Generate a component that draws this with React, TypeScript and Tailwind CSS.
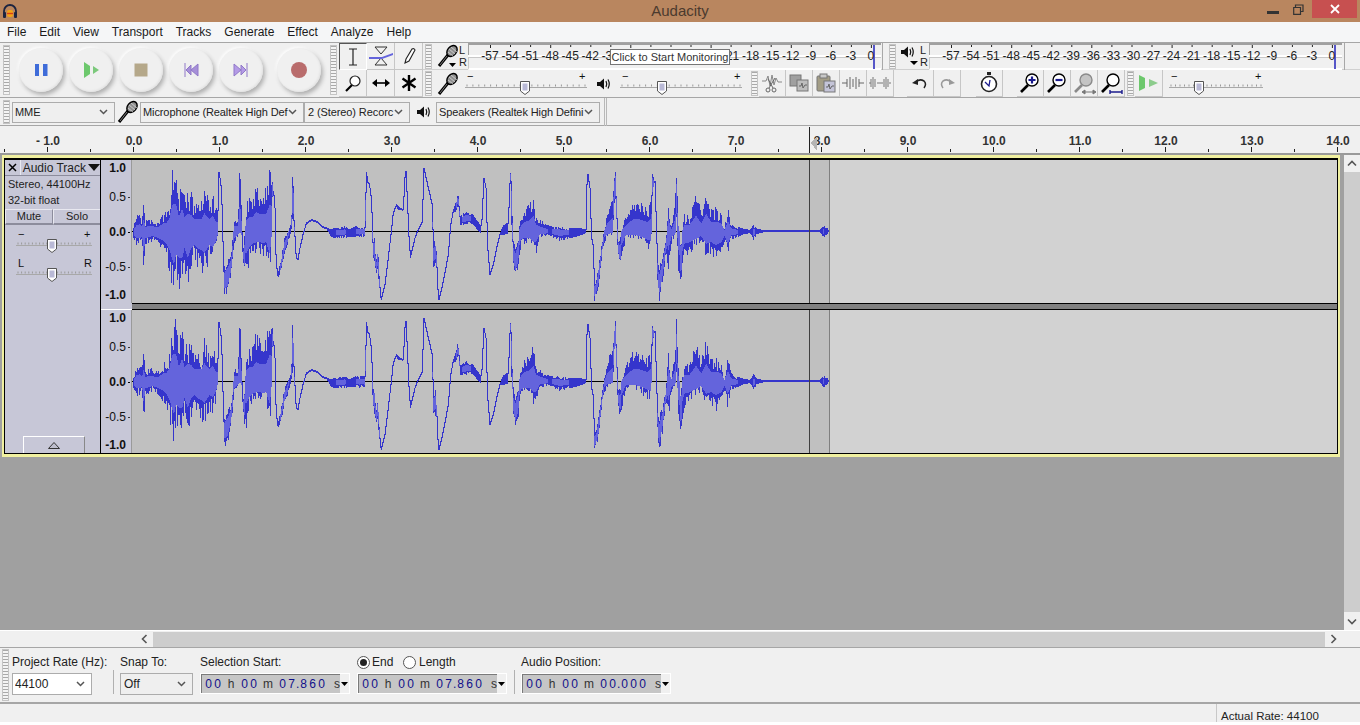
import type { JSX, ReactNode } from "react";

const FONT = "font-['Liberation_Sans',Arial,sans-serif]";
const GRIP =
  "bg-[repeating-linear-gradient(to_bottom,#a9a9a9_0,#a9a9a9_1px,#f4f4f4_1px,#f4f4f4_3px)]";

// waveform outline read off the screenshot: [x, top, bottom] in 3x zoom units
type Key = [number, number, number?];
const ZONE_A: Key[] = [
  [12, 210, 240], [20, 175, 265], [30, 165, 265], [38, 180, 255], [43, 125, 370], [47, 190, 260], [55, 180, 260],
  [70, 180, 250], [85, 190, 260], [100, 160, 280], [110, 160, 300], [120, 120, 340], [128, 20, 400], [133, 15, 435],
  [140, 15, 370], [148, 110, 390], [158, 50, 395], [165, 110, 330], [175, 90, 395], [185, 95, 330], [195, 130, 310],
  [205, 130, 330], [215, 130, 340], [225, 85, 360], [240, 130, 310], [250, 100, 320], [260, 150, 280], [264, 150, 240],
  [265, 30], [270, 60], [275, 100], [278, 220], [282, 340], [285, 320, 415], [295, 300, 410], [305, 290, 350],
  [315, 180, 260], [325, 180, 240], [331, 10, 225], [335, 100, 235], [340, 290], [345, 230, 350], [350, 140, 365],
  [360, 115, 320], [370, 115, 300], [380, 70, 290], [390, 90, 290], [400, 85, 295], [410, 90, 290], [420, 20, 360],
  [425, 20, 300], [430, 70, 90], [435, 150], [437, 270], [440, 325], [445, 350, 360], [455, 300, 340], [465, 240, 290],
  [475, 220, 260], [485, 200, 220], [490, 15, 200], [493, 100, 200], [497, 280], [503, 310], [510, 270], [520, 225],
  [530, 195], [545, 185], [560, 190], [575, 205], [590, 210], [605, 215, 235], [620, 210, 240], [645, 205, 240],
  [660, 215, 235], [680, 205, 235], [700, 205, 235], [706, 215, 240], [709, 35, 200], [715, 70], [720, 90],
];
const ZONE_B: Key[] = [
  [0, 205, 240], [15, 205, 240], [17, 150, 240], [20, 35, 50], [25, 80], [35, 130], [40, 240, 300], [45, 235, 320],
  [50, 310, 350], [55, 260, 340], [60, 350, 400], [65, 420, 430], [75, 380], [85, 300], [95, 210], [100, 165],
  [110, 140], [115, 145, 155], [130, 155], [137, 20], [142, 120], [148, 260], [153, 290, 300], [165, 240], [175, 215],
  [187, 190], [192, 30], [205, 90], [217, 140], [222, 250, 330], [230, 245, 320], [236, 430], [250, 370], [265, 290],
  [272, 200], [280, 160], [290, 130, 160], [296, 100, 140], [302, 175, 200], [320, 160, 200], [340, 170, 195],
  [350, 185, 210], [365, 205, 225], [372, 60], [378, 90], [383, 265], [390, 350], [400, 320], [410, 270], [420, 230],
  [430, 205, 230], [445, 195, 225], [452, 30], [456, 60, 210], [462, 250, 330], [468, 260, 360], [475, 240, 340],
  [485, 170, 270], [495, 150, 260], [510, 135, 260], [522, 105, 290], [530, 170, 290], [540, 180, 240], [555, 195, 235],
  [570, 205, 230], [600, 205, 250], [630, 210, 240], [650, 210, 235], [678, 215, 225], [682, 35], [690, 90], [695, 240],
  [700, 265], [705, 370, 430], [712, 360, 410], [718, 310, 390],
];
const ZONE_C: Key[] = [
  [0, 90], [5, 180], [12, 295], [15, 370, 430], [22, 350, 400], [30, 290, 300], [40, 240, 270], [55, 150, 235],
  [70, 120, 230], [77, 10, 120], [80, 50, 190], [85, 240, 290], [92, 240, 330], [100, 200, 290], [110, 170, 240],
  [130, 130, 240], [150, 130, 250], [175, 150, 275], [185, 120, 280], [188, 35, 130], [195, 70], [200, 220],
  [205, 320, 400], [210, 320, 430], [220, 290, 370], [230, 240, 280], [237, 130, 340], [245, 210, 260], [255, 145, 240],
  [262, 15, 210], [268, 210, 370], [275, 230, 380], [285, 170, 300], [300, 170, 290], [320, 100, 270], [335, 160, 250],
  [350, 85, 300], [365, 150, 290], [380, 145, 310], [395, 160, 290], [405, 210, 250], [415, 140, 300], [425, 195, 245],
  [440, 205, 240], [460, 213, 228], [480, 217, 224], [488, 210, 232], [493, 195, 252], [500, 212, 228], [520, 218, 222],
  [690, 218, 222], [697, 212, 228], [703, 202, 238], [708, 210, 230], [714, 210, 228], [717, 218, 222],
];

const KEYS: [number, number, number][] = [
  ...ZONE_A.map((k) => [130 + k[0] / 3, k[1] / 3 - 2, (k[2] ?? k[1]) / 3 - 2] as [number, number, number]),
  ...ZONE_B.map((k) => [360 + k[0] / 3, k[1] / 3 - 2, (k[2] ?? k[1]) / 3 - 2] as [number, number, number]),
  ...ZONE_C.filter((k) => k[0] > 30).map((k) => [590 + k[0] / 3, k[1] / 3 - 2, (k[2] ?? k[1]) / 3 - 2] as [number, number, number]),
].sort((a, b) => a[0] - b[0]);

const MID = 71.5;

function buildWave(seed: number) {
  let s = seed;
  const rnd = () => {
    s = (s * 16807) % 2147483647;
    return s / 2147483647;
  };
  let dark = "";
  let light = "";
  let prevTop = MID;
  let prevBot = MID;
  for (let x = 134; x <= 829; x++) {
    let i = 0;
    while (i < KEYS.length - 2 && KEYS[i + 1][0] < x) i++;
    const a = KEYS[i];
    const b = KEYS[i + 1];
    const t = Math.min(1, Math.max(0, (x - a[0]) / (b[0] - a[0] || 1)));
    const top = a[1] + (b[1] - a[1]) * t;
    const bot = a[2] + (b[2] - a[2]) * t;
    const w = bot - top;
    let y1 = top;
    let y2 = bot;
    if (w > 10) {
      y1 += rnd() * w * 0.28;
      y2 -= rnd() * w * 0.28;
    }
    const dy1 = Math.floor(Math.min(y1, prevBot));
    const dy2 = Math.ceil(Math.max(y2, prevTop, dy1 + 2));
    dark += `M${x - 132.5} ${dy1}V${dy2}`;
    if (w > 10) {
      let l1 = top + w * 0.25;
      let l2 = bot - w * 0.25;
      if (top < MID && bot > MID) {
        l1 = MID - (MID - top) * 0.4;
        l2 = MID + (bot - MID) * 0.46;
      }
      light += `M${x - 132.5} ${l1.toFixed(1)}V${l2.toFixed(1)}`;
    }
    prevTop = y1;
    prevBot = y2;
  }
  return { dark, light };
}

const WAVE_ONE = buildWave(1234);
const WAVE_TWO = buildWave(98765);

const Grip = ({ className = "h-[24px]" }: { className?: string }): JSX.Element => (
  <div className={`w-[7px] shrink-0 border border-[#c4c4c4] ${GRIP} ${className}`} />
);

const Mic = ({ drop }: { drop?: boolean }): JSX.Element => (
  <svg width="22" height="24" viewBox="0 0 22 24" className="block">
    <path d="M2 22 L11 11" stroke="#000" strokeWidth="3" />
    <path d="M3 21 L10 12" stroke="#999" strokeWidth="0.8" />
    <ellipse cx="15" cy="7" rx="4.5" ry="6" transform="rotate(40 15 7)" fill="#8f8f8f" stroke="#000" strokeWidth="1.4" />
    <path d="M12 5 L18 10 M14 3 L20 8 M11 8 L16 12" stroke="#e4e4e4" strokeWidth="0.7" />
    {drop && <path d="M12 19H19L15.5 23Z" fill="#000" />}
  </svg>
);

const Speaker = ({ drop }: { drop?: boolean }): JSX.Element => (
  <svg width="18" height={drop ? 22 : 14} viewBox={drop ? "0 0 18 22" : "0 0 18 14"} className="block">
    <path d="M0 5H3L7 1.5V12.5L3 9H0Z" fill="#111" />
    <path d="M9 4Q10.5 7 9 10M11 2.5Q13.5 7 11 11.5" fill="none" stroke="#111" strokeWidth="1.2" />
    {drop && <path d="M9 16H17L13 20Z" fill="#000" />}
  </svg>
);

const Glass = ({ mark, color = "#000" }: { mark?: ReactNode; color?: string }): JSX.Element => (
  <svg width="24" height="24" viewBox="0 0 24 24">
    <path d="M3 21 L10 14" stroke={color} strokeWidth="2.6" />
    <circle cx="14" cy="9" r="6" fill={color === "#000" ? "#fff" : "#c4c4c4"} stroke={color} strokeWidth="1.4" />
    {mark}
  </svg>
);

const Slider = ({ width, thumb, left = "−", right = "+" }: { width: number; thumb: number; left?: string; right?: string }): JSX.Element => {
  const ticks: number[] = [];
  for (let x = 2; x < width; x += (width - 4) / 20) ticks.push(x);
  return (
    <svg width={width} height="28" viewBox={`0 0 ${width} 28`} className="block shrink-0">
      <text x="2" y="11" fontSize="11" fontFamily="Liberation Sans" fill="#111">{left}</text>
      <text x={width - 8} y="11" fontSize="11" fontFamily="Liberation Sans" fill="#111">{right}</text>
      {ticks.map((x) => (
        <path key={x} d={`M${x.toFixed(1)} 15.5V17.5`} stroke="#9a9a9a" />
      ))}
      <path d={`M0 18.5H${width}`} stroke="#a8a8a8" strokeWidth="1" />
      <path d={`M${thumb - 4.5} 12.5H${thumb + 4.5}V22L${thumb} 25.5L${thumb - 4.5} 22Z`} fill="#fff" stroke="#555" />
      <rect x={thumb - 2.5} y="14.5" width="5" height="7" fill="#b9b9d6" />
    </svg>
  );
};

const ToolCell = ({ active, children, className = "w-[27px]" }: { active?: boolean; children: ReactNode; className?: string }): JSX.Element => (
  <div
    className={`h-[27px] shrink-0 flex items-center justify-center border-r border-b ${className} ${
      active ? "border-[#fff] border-l border-l-[#555] border-t border-t-[#555]" : "border-[#c6c6c6]"
    }`}
  >
    {children}
  </div>
);

const METER_LABELS = ["-57", "-54", "-51", "-48", "-45", "-42", "-39", "-36", "-33", "-30", "-27", "-24", "-21", "-18", "-15", "-12", "-9", "-6", "-3", "0"];

const Meter = ({ width }: { width: number }): JSX.Element => (
  <div className="relative h-[27px] shrink-0" style={{ width }}>
    <div className="h-[12px] border-t-2 border-l border-[#a0a0a0]" />
    <div className="h-[2px] bg-white" />
    <div className="h-[13px] border-l border-t border-[#c8c8c8] border-b-2 border-b-white" />
    <svg width={width} height="27" className="absolute left-0 top-0">
      {METER_LABELS.map((_, i) => (
        <path key={i} d={`M${(22.5 + i * 20.05).toFixed(1)} 2V${i % 4 === 3 || i === 0 ? 5 : 4}`} stroke="#222" />
      ))}
      <path d={`M${width - 7} 2V26`} stroke="#5656c8" strokeWidth="2" />
    </svg>
    <div className="absolute left-[12px] top-[6px] flex text-[12px] leading-[15px] text-[#222]">
      {METER_LABELS.map((l) => (
        <span key={l} className="w-[20.05px] text-center shrink-0">{l}</span>
      ))}
    </div>
  </div>
);

const Chevron = (): JSX.Element => (
  <svg width="9" height="6" viewBox="0 0 9 6" className="shrink-0">
    <path d="M1 1L4.5 4.5L8 1" fill="none" stroke="#555" strokeWidth="1.5" />
  </svg>
);

const Select = ({ label, className, white }: { label: string; className: string; white?: boolean }): JSX.Element => (
  <div className={`flex items-center shrink-0 border border-[#acacac] pr-[6px] text-[#222] ${white ? "bg-white" : "bg-[#efefef]"} ${className}`}>
    <span className="flex-1 overflow-hidden whitespace-nowrap">{label}</span>
    <Chevron />
  </div>
);

const DIGIT = "w-[9px] text-center text-[#10108a]";

const TimeBox = ({ secs, milli }: { secs: string; milli: string }): JSX.Element => (
  <div className="w-[150px] h-[21px] shrink-0 flex items-center bg-[#c6c6c6] border border-white shadow-[inset_1px_1px_0_#7a7a7a] pl-[3px] text-[12px] text-[#333]">
    <span className={DIGIT}>0</span>
    <span className={DIGIT}>0</span>
    <span className="w-[18px] text-center">h</span>
    <span className={DIGIT}>0</span>
    <span className={DIGIT}>0</span>
    <span className="w-[20px] text-center">m</span>
    <span className={DIGIT}>{secs[0]}</span>
    <span className={DIGIT}>{secs[1]}</span>
    <span className="w-[3px] text-center text-[#10108a]">.</span>
    <span className={DIGIT}>{milli[0]}</span>
    <span className={DIGIT}>{milli[1]}</span>
    <span className={DIGIT}>{milli[2]}</span>
    <span className="w-[14px] text-right">s</span>
    <span className="ml-auto w-[9px] h-[19px] bg-[#f0f0f0] flex items-center justify-center text-[0px]">
      <svg width="7" height="4" viewBox="0 0 7 4"><path d="M0 0H7L3.5 4Z" fill="#000" /></svg>
    </span>
  </div>
);

const Radio = ({ checked }: { checked?: boolean }): JSX.Element => (
  <span className="w-[13px] h-[13px] rounded-full border border-[#555] bg-white flex items-center justify-center shrink-0">
    {checked && <span className="w-[7px] h-[7px] rounded-full bg-[#222]" />}
  </span>
);

const TrackRuler = (): JSX.Element => (
  <div className="w-[31px] h-[143px] shrink-0 bg-[#c7c7d7] border-r border-[#9a9a9a] flex flex-col items-end pr-[1px] text-[12px] leading-[14px] text-[#111] font-bold">
    <span className="mt-[1px] mr-[4px]">1.0</span>
    <span className="mt-[15px] flex items-center font-normal">0.5<i className="ml-[2px] w-[2px] h-[1px] bg-[#333]" /></span>
    <span className="mt-[21px] flex items-center">0.0<i className="ml-[2px] w-[2px] h-[1px] bg-[#000]" /></span>
    <span className="mt-[21px] flex items-center font-normal">-0.5<i className="ml-[2px] w-[2px] h-[1px] bg-[#333]" /></span>
    <span className="mt-[14px] mr-[4px]">-1.0</span>
  </div>
);

const Wave = ({ data }: { data: { dark: string; light: string } }): JSX.Element => (
  <svg width="1205" height="143" viewBox="0 0 1205 143" className="block shrink-0" shapeRendering="crispEdges">
    <rect x="0" y="0" width="1205" height="143" fill="#d2d2d2" />
    <rect x="0" y="0" width="697" height="143" fill="#c0c0c0" />
    <path d="M0 71.5H677" stroke="#000" strokeWidth="1" />
    <path d={data.dark} stroke="#3535cc" strokeWidth="1" fill="none" />
    <path d={data.light} stroke="#6464dc" strokeWidth="1" fill="none" />
    <path d="M677.5 0V143" stroke="#404040" />
    <path d="M697.5 0V143" stroke="#808080" />
  </svg>
);

const RULER_LABELS = ["- 1.0", "0.0", "1.0", "2.0", "3.0", "4.0", "5.0", "6.0", "7.0", "8.0", "9.0", "10.0", "11.0", "12.0", "13.0", "14.0"];

export default function App(): JSX.Element {
  return (
    <div className={`w-[1360px] h-[725px] overflow-hidden bg-white flex flex-col ${FONT}`}>
      {/* Title bar */}
      <div className="h-[22px] shrink-0 bg-[#b9865f] flex items-center justify-between relative">
        <svg width="16" height="16" viewBox="0 0 16 16" className="ml-[2px]">
          <path d="M2 11V8a6 6 0 0 1 12 0v3" fill="none" stroke="#1c2440" strokeWidth="1.8" />
          <rect x="1" y="9" width="3" height="6" rx="1" fill="#1c2440" />
          <rect x="12" y="9" width="3" height="6" rx="1" fill="#1c2440" />
          <rect x="5" y="7" width="6" height="7" rx="2" fill="#f2a316" />
          <path d="M5 10.5H11" stroke="#d8401c" strokeWidth="1.4" />
        </svg>
        <span className="absolute left-0 right-0 text-center text-[15px] text-[#4b3a2e]">Audacity</span>
        <div className="flex items-center relative">
          <svg width="12" height="4" viewBox="0 0 12 4" className="mb-[-4px] mr-[14px]"><rect y="0" width="12" height="3" fill="#333" /></svg>
          <svg width="11" height="11" viewBox="0 0 11 11" className="mb-[4px] mr-[8px]">
            <path d="M2.5 3.5V1H10V7.5H7.5M.7 3.5H7.5V10.3H.7Z" fill="none" stroke="#333" strokeWidth="1.2" />
          </svg>
          <div className="w-[45px] h-[18px] mb-[4px] bg-[#c75050] flex items-center justify-center mr-[3px]">
            <svg width="10" height="10" viewBox="0 0 10 10"><path d="M1 1L9 9M9 1L1 9" stroke="#fff" strokeWidth="1.8" /></svg>
          </div>
        </div>
      </div>

      {/* Menu bar */}
      <div className="h-[20px] shrink-0 bg-[#f5f6f7] flex items-center gap-[13px] px-[7px] text-[12px] text-[#1a1a1a]">
        {["File", "Edit", "View", "Transport", "Tracks", "Generate", "Effect", "Analyze", "Help"].map((m) => (
          <span key={m}>{m}</span>
        ))}
      </div>

      {/* Toolbars */}
      <div className="h-[56px] shrink-0 bg-[#f0f0f0] flex border-t border-b border-[#a6a6a6]">
        {/* Transport */}
        <div className="w-[330px] shrink-0 flex items-center pl-[3px]">
          <Grip className="h-[50px]" />
          <div className="flex items-center gap-[6px] ml-[9px]">
            <TransportBtn>
              <path d="M6 6H10V18H6ZM14 6H18.5V18H14Z" fill="#3f6cd9" />
            </TransportBtn>
            <TransportBtn>
              <path d="M5 4L11 8V16L5 20Z" fill="#6dc86d" />
              <path d="M14 8L20 12L14 16Z" fill="#7cc97c" />
            </TransportBtn>
            <TransportBtn>
              <rect x="5.5" y="5.5" width="13" height="13" fill="#b5a88a" />
            </TransportBtn>
            <TransportBtn>
              <path d="M6 5V19M12 7L7 12L12 17ZM19 6L12 12L19 18Z" fill="#a68fd8" stroke="#9079c8" strokeWidth="1" />
            </TransportBtn>
            <TransportBtn>
              <path d="M18 5V19M12 7L17 12L12 17ZM5 6L12 12L5 18Z" fill="#b49be6" stroke="#9079c8" strokeWidth="1" />
            </TransportBtn>
            <TransportBtn className="ml-[8px]">
              <circle cx="12" cy="12" r="8" fill="#b96c6c" />
            </TransportBtn>
          </div>
        </div>

        {/* Tools */}
        <div className="w-[93px] shrink-0 flex items-center">
          <Grip className="h-[50px]" />
          <div className="ml-[2px] grid grid-cols-3 w-[84px]">
            <ToolCell active className="w-[28px]">
              <svg width="12" height="18" viewBox="0 0 12 18"><path d="M2 1H10M6 1V17M2 17H10" stroke="#222" strokeWidth="1.2" /></svg>
            </ToolCell>
            <ToolCell className="w-[28px]">
              <svg width="26" height="20" viewBox="0 0 26 20">
                <path d="M7 1H19L13 8ZM7 19H19L13 12Z" fill="none" stroke="#333" />
                <path d="M1 11L14 11L25 7V9L14 13H1Z" fill="#6464dc" />
              </svg>
            </ToolCell>
            <ToolCell className="w-[28px]">
              <svg width="16" height="18" viewBox="0 0 16 18">
                <path d="M5 12L11 2Q13 1 14 3L8 14L4 16Z" fill="#fff" stroke="#222" strokeWidth="1.1" />
              </svg>
            </ToolCell>
            <ToolCell className="w-[28px]">
              <svg width="18" height="20" viewBox="0 0 18 20">
                <path d="M2 18L8 12" stroke="#000" strokeWidth="2.2" />
                <circle cx="11" cy="8" r="5" fill="#fff" stroke="#222" strokeWidth="1.2" />
              </svg>
            </ToolCell>
            <ToolCell className="w-[28px]">
              <svg width="18" height="10" viewBox="0 0 18 10"><path d="M4 5H14" stroke="#000" strokeWidth="1.6" /><path d="M0 5L5 1V9ZM18 5L13 1V9Z" fill="#000" /></svg>
            </ToolCell>
            <ToolCell className="w-[28px]">
              <svg width="16" height="18" viewBox="0 0 16 18"><path d="M8 1V17M1.5 4.5L14.5 13.5M14.5 4.5L1.5 13.5" stroke="#000" strokeWidth="2.4" /></svg>
            </ToolCell>
          </div>
        </div>

        <div className="flex-1 flex flex-col min-w-0">
          {/* Meters */}
          <div className="h-[27px] shrink-0 flex items-center border-b border-[#d0d0d0]">
            <Grip className="h-[25px] ml-[2px]" />
            <div className="w-[21px] ml-[5px] shrink-0"><Mic drop /></div>
            <div className="w-[8px] ml-[1px] text-[11px] leading-[12px] text-[#222]">
              <div>L</div>
              <div>R</div>
            </div>
            <div className="ml-[1px]"><Meter width={413} /></div>
            <div className="w-[1px] h-[27px] bg-[#a8a8a8] ml-[1px]" />
            <Grip className="h-[25px] ml-[6px]" />
            <div className="ml-[5px] w-[18px] shrink-0"><Speaker drop /></div>
            <div className="w-[8px] ml-[1px] text-[11px] leading-[12px] text-[#222]">
              <div>L</div>
              <div>R</div>
            </div>
            <div className="ml-[1px]"><Meter width={413} /></div>
            <div className="w-[1px] h-[27px] bg-[#a8a8a8] ml-[2px]" />
            <div className="absolute left-[610px] top-[49px] w-[120px] h-[16px] bg-white border border-[#767676] text-[11px] leading-[14px] text-[#333] text-center whitespace-nowrap">
              Click to Start Monitoring
            </div>
          </div>
          {/* Mixer, edit, zoom */}
          <div className="h-[27px] shrink-0 flex items-center">
            <Grip className="h-[25px] ml-[2px]" />
            <div className="ml-[5px] w-[21px] shrink-0"><Mic /></div>
            <div className="ml-[7px] mt-[-1px]"><Slider width={122} thumb={60} /></div>
            <div className="ml-[10px] w-[14px] shrink-0"><Speaker /></div>
            <div className="ml-[9px] mt-[-1px]"><Slider width={122} thumb={42} /></div>
            <Grip className="h-[25px] ml-[9px]" />
            <ToolCell className="w-[27px] ml-[1px]">
              <svg width="22" height="20" viewBox="0 0 22 20">
                <path d="M1 8H5L7 3L9 13L11 2L13 12L15 5L17 9H21" fill="none" stroke="#888" />
                <circle cx="7" cy="17" r="2" fill="none" stroke="#666" /><circle cx="13" cy="17" r="2" fill="none" stroke="#666" />
                <path d="M8 15L14 5M12 15L7 6" stroke="#666" />
              </svg>
            </ToolCell>
            <ToolCell>
              <svg width="20" height="18" viewBox="0 0 20 18">
                <rect x="1" y="1" width="11" height="11" fill="#a0a0a0" stroke="#777" />
                <rect x="8" y="6" width="11" height="11" fill="#bdbdbd" stroke="#777" />
                <path d="M10 12H12L13 9L14 14L16 11H18" fill="none" stroke="#666" />
              </svg>
            </ToolCell>
            <ToolCell>
              <svg width="20" height="20" viewBox="0 0 20 20">
                <rect x="1" y="3" width="13" height="15" rx="1" fill="#a39d86" stroke="#777" />
                <rect x="4" y="1" width="7" height="4" fill="#c8c8c8" stroke="#777" />
                <rect x="8" y="8" width="11" height="11" fill="#c4c4d8" stroke="#777" />
                <path d="M10 14H12L13 11L14 16L16 13H18" fill="none" stroke="#666" />
              </svg>
            </ToolCell>
            <ToolCell>
              <svg width="22" height="14" viewBox="0 0 22 14"><path d="M0 7H5M17 7H22M5 3V11M8 1V13M11 3V11M14 1V13M17 3V11" stroke="#666" fill="none" /></svg>
            </ToolCell>
            <ToolCell>
              <svg width="22" height="14" viewBox="0 0 22 14"><path d="M2 3V11M4 1V13M6 3V11M8 7H14M15 3V11M17 1V13M19 3V11M0 7H2M20 7H22" stroke="#777" fill="none" /></svg>
            </ToolCell>
            <div className="w-[13px] shrink-0" />
            <ToolCell>
              <svg width="16" height="14" viewBox="0 0 16 14"><path d="M3 7Q7 2 12 5Q15 8 12 12" fill="none" stroke="#222" strokeWidth="1.5" /><path d="M0 7L6 3V9Z" fill="#222" /></svg>
            </ToolCell>
            <ToolCell>
              <svg width="16" height="14" viewBox="0 0 16 14"><path d="M13 7Q9 2 4 5Q1 8 4 12" fill="none" stroke="#999" strokeWidth="1.5" /><path d="M16 7L10 3V9Z" fill="#999" /></svg>
            </ToolCell>
            <div className="w-[15px] shrink-0" />
            <ToolCell>
              <svg width="18" height="22" viewBox="0 0 18 22">
                <rect x="7" y="0" width="4" height="3" fill="#222" />
                <circle cx="9" cy="12" r="7.5" fill="#fff" stroke="#222" strokeWidth="1.6" />
                <path d="M5 10L9 14L10 8" fill="none" stroke="#1a1a8c" strokeWidth="1.3" />
              </svg>
            </ToolCell>
            <div className="w-[14px] shrink-0" />
            <ToolCell>
              <Glass mark={<path d="M10.5 9H17.5M14 5.5V12.5" stroke="#1a1a8c" strokeWidth="2.2" />} />
            </ToolCell>
            <ToolCell>
              <Glass mark={<path d="M10.5 9H17.5" stroke="#1a1a8c" strokeWidth="2.2" />} />
            </ToolCell>
            <ToolCell>
              <Glass color="#8a8a8a" mark={<path d="M12 21H22M10 21L13 19V23ZM24 21L21 19V23Z" stroke="#777" fill="#777" />} />
            </ToolCell>
            <ToolCell>
              <Glass mark={<path d="M11 21H23M11 19V23M23 19V23" stroke="#1a1a8c" strokeWidth="1.4" />} />
            </ToolCell>
            <Grip className="h-[25px] ml-[2px]" />
            <ToolCell className="w-[28px] ml-[1px]">
              <svg width="22" height="18" viewBox="0 0 22 18">
                <path d="M1 1L7 4V14L1 17Z" fill="#6dc86d" />
                <path d="M11 5L20 9L11 13Z" fill="#8ccc8c" />
              </svg>
            </ToolCell>
            <div className="ml-[6px] mt-[-1px]"><Slider width={94} thumb={30} /></div>
          </div>
        </div>
      </div>

      {/* Device toolbar */}
      <div className="h-[28px] shrink-0 bg-[#f0f0f0] flex items-center border-b border-[#a6a6a6] text-[11px] tracking-[-0.1px]">
        <Grip className="h-[24px] ml-[3px]" />
        <Select label="MME" className="ml-[2px] w-[103px] h-[21px] pl-[2px] mt-[1px]" />
        <div className="ml-[2px] w-[23px] shrink-0"><Mic /></div>
        <Select label="Microphone (Realtek High Def" className="w-[164px] h-[21px] pl-[2px] mt-[1px]" />
        <Select label="2 (Stereo) Recorc" className="w-[106px] h-[21px] pl-[3px] mt-[1px]" />
        <div className="ml-[7px] w-[14px] shrink-0"><Speaker /></div>
        <Select label="Speakers (Realtek High Defini" className="ml-[5px] w-[164px] h-[21px] pl-[2px] mt-[1px]" />
        <div className="ml-[4px] w-[3px] h-[28px] border-x border-[#b8b8b8]" />
      </div>

      {/* Timeline */}
      <div className="h-[29px] shrink-0 bg-[#f0f0f0] relative pt-[7px] border-b-2 border-[#9a9a9a]">
        <div className="flex ml-[5px] text-[12px] leading-[16px] font-bold text-[#333]">
          {RULER_LABELS.map((l) => (
            <span key={l} className="w-[86px] shrink-0 text-center">{l}</span>
          ))}
        </div>
        <svg width="1360" height="27" className="absolute left-0 top-0" shapeRendering="crispEdges">
          {Array.from({ length: 32 }, (_, i) => {
            const x = 4.5 + i * 43;
            return <path key={i} d={`M${x} ${i % 2 ? 21 : 23}V26`} stroke="#222" />;
          })}
          <path d="M809.5 1V27" stroke="#222" />
          <path d="M817 10V25L811 17Z" fill="#b4b4b4" />
        </svg>
      </div>

      {/* Tracks */}
      <div className="h-[475px] shrink-0 flex bg-[#a0a0a0]">
        <div className="w-[1344px] shrink-0 pl-[2px] pr-[4px]">
          <div className="h-[302px] border-t-[3px] border-b-[3px] border-x-2 border-[#f0f0a0]">
            <div className="h-[296px] border-t-2 border-b border-x border-black flex">
              <div className="w-[96px] shrink-0 bg-[#c7c7d7] border-r border-black flex flex-col text-[11px] text-[#222]">
                <div className="h-[16px] shrink-0 flex border-b border-[#8c8c9c]">
                  <div className="w-[16px] flex items-center justify-center border-r border-[#e8e8f0]">
                    <svg width="9" height="9" viewBox="0 0 9 9"><path d="M1 1L8 8M8 1L1 8" stroke="#000" strokeWidth="1.5" /></svg>
                  </div>
                  <div className="flex-1 flex items-center pl-[2px] text-[12px] whitespace-nowrap">
                    <span>Audio Track</span>
                    <svg width="12" height="7" viewBox="0 0 12 7" className="ml-[2px] shrink-0"><path d="M0 0H12L6 7Z" fill="#111" /></svg>
                  </div>
                </div>
                <div className="h-[32px] shrink-0 pl-[3px] leading-[16px]">
                  <div>Stereo, 44100Hz</div>
                  <div>32-bit float</div>
                </div>
                <div className="h-[17px] shrink-0 flex text-[11px] pt-[1px]">
                  <div className="w-[48px] flex items-center justify-center border-t border-l border-[#e8e8f0] border-b-2 border-b-[#8c8c9c] border-r border-r-[#8c8c9c]">Mute</div>
                  <div className="flex-1 flex items-center justify-center border-t border-l border-[#e8e8f0] border-b-2 border-b-[#8c8c9c]">Solo</div>
                </div>
                <div className="ml-[11px] mt-[2px]"><Slider width={76} thumb={36} /></div>
                <div className="ml-[11px] mt-[1px]"><Slider width={76} thumb={36} left="L" right="R" /></div>
                <div className="mt-auto ml-[18px] w-[62px] h-[17px] border-t border-l border-white border-r border-r-[#888] flex items-center justify-center">
                  <svg width="12" height="7" viewBox="0 0 12 7"><path d="M6 0.5L11.5 6.5H0.5Z" fill="#bdbdcc" stroke="#333" /></svg>
                </div>
              </div>
              <div className="flex-1 flex flex-col min-w-0">
                <div className="flex"><TrackRuler /><Wave data={WAVE_ONE} /></div>
                <div className="h-[7px] shrink-0 flex">
                  <div className="w-[31px] bg-[#c7c7d7] border-b border-white" />
                  <div className="flex-1 bg-[#808080] border-y border-black" />
                </div>
                <div className="flex"><TrackRuler /><Wave data={WAVE_TWO} /></div>
              </div>
            </div>
          </div>
        </div>
        <div className="w-[16px] shrink-0 bg-[#f0f0f0] flex flex-col items-center">
          <div className="h-[17px] flex items-center justify-center">
            <svg width="10" height="7" viewBox="0 0 10 7"><path d="M1 5.5L5 1.5L9 5.5" fill="none" stroke="#555" strokeWidth="1.6" /></svg>
          </div>
          <div className="w-full h-[440px] bg-[#cdcdcd]" />
          <div className="flex-1 flex items-center justify-center">
            <svg width="10" height="7" viewBox="0 0 10 7"><path d="M1 1.5L5 5.5L9 1.5" fill="none" stroke="#555" strokeWidth="1.6" /></svg>
          </div>
        </div>
      </div>

      {/* Horizontal scrollbar */}
      <div className="h-[17px] shrink-0 bg-[#f0f0f0] border-t border-white flex items-center">
        <div className="w-[153px] flex justify-end pr-[5px]">
          <svg width="7" height="10" viewBox="0 0 7 10"><path d="M5.5 1L1.5 5L5.5 9" fill="none" stroke="#555" strokeWidth="1.6" /></svg>
        </div>
        <div className="w-[1172px] h-[15px] bg-[#cdcdcd]" />
        <div className="ml-[5px]">
          <svg width="7" height="10" viewBox="0 0 7 10"><path d="M1.5 1L5.5 5L1.5 9" fill="none" stroke="#555" strokeWidth="1.6" /></svg>
        </div>
      </div>

      {/* Selection toolbar */}
      <div className="h-[57px] shrink-0 bg-[#f0f0f0] border-t border-b-2 border-[#a6a6a6] flex items-center pb-[2px] text-[12px] text-[#222]">
        <Grip className="h-[52px] ml-[2px] mt-[2px]" />
        <div className="ml-[3px] w-[88px] shrink-0 flex flex-col gap-[3px]">
          <span className="whitespace-nowrap leading-[16px]">Project Rate (Hz):</span>
          <Select label="44100" white className="w-[80px] h-[22px] pl-[2px]" />
        </div>
        <div className="ml-[13px] w-[1px] h-[24px] self-end mb-[6px] bg-[#b0b0b0]" />
        <div className="ml-[6px] w-[74px] shrink-0 flex flex-col gap-[3px]">
          <span className="leading-[16px]">Snap To:</span>
          <Select label="Off" className="w-[73px] h-[22px] pl-[3px]" />
        </div>
        <div className="ml-[6px] w-[157px] shrink-0 flex flex-col gap-[3px]">
          <span className="leading-[16px]">Selection Start:</span>
          <TimeBox secs="07" milli="860" />
        </div>
        <div className="w-[157px] shrink-0 flex flex-col gap-[3px]">
          <div className="flex items-center h-[16px]">
            <Radio checked />
            <span className="ml-[2px] w-[31px]">End</span>
            <Radio />
            <span className="ml-[3px]">Length</span>
          </div>
          <TimeBox secs="07" milli="860" />
        </div>
        <div className="w-[1px] h-[24px] self-end mb-[6px] bg-[#b0b0b0]" />
        <div className="ml-[6px] flex flex-col gap-[3px]">
          <span className="leading-[16px]">Audio Position:</span>
          <TimeBox secs="00" milli="000" />
        </div>
      </div>

      {/* Status bar */}
      <div className="h-[18px] shrink-0 bg-[#f0f0f0] flex items-end text-[11.5px] text-[#222]">
        <div className="ml-[1216px] h-[18px] border-l border-[#c8c8c8] pl-[4px] leading-[24px] overflow-hidden">Actual Rate: 44100</div>
      </div>
    </div>
  );
}

function TransportBtn({ children, className = "" }: { children: ReactNode; className?: string }): JSX.Element {
  return (
    <div className={`w-[44px] h-[44px] shrink-0 rounded-full bg-[#f0f0f0] flex items-center justify-center shadow-[2px_3px_4px_#b0b0b0,-1px_-1px_3px_#ffffff,inset_-1px_-1px_2px_#e2e2e2] ${className}`}>
      <svg width="24" height="24" viewBox="0 0 24 24">{children}</svg>
    </div>
  );
}
